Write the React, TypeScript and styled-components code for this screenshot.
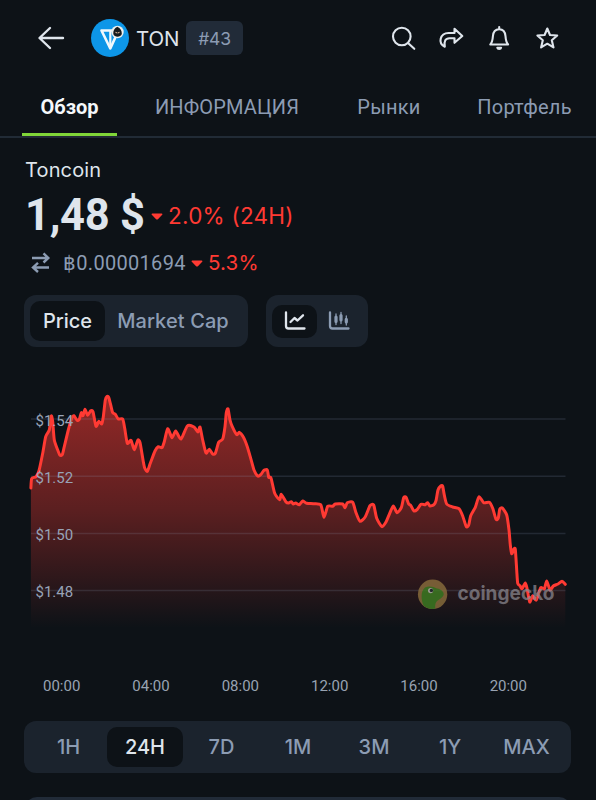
import React from 'react';
import styled, { createGlobalStyle } from 'styled-components';

const color = {
  bg: '#0d1217',
  panel: '#1b232d',
  text: '#dfe5ec',
  muted: '#8c9cb3',
  red: '#ff3a33',
  green: '#80d638',
};

const GlobalStyle = createGlobalStyle`
  * { box-sizing: border-box; }
  body {
    margin: 0;
    background: ${color.bg};
    color: ${color.text};
    font-family: Inter, "Liberation Sans", sans-serif;
    overflow: hidden;
  }
`;

const Screen = styled.main`
  width: 596px;
  height: 800px;
  overflow: hidden;
  background: ${color.bg};
  display: flex;
  flex-direction: column;
`;

const Header = styled.header`
  flex: none;
  height: 76px;
  padding: 0 36px 0 37px;
  display: flex;
  align-items: center;
`;

const BackIcon = styled.svg`
  width: 28px;
  height: 26px;
  margin-right: 26px;
`;

const CoinLogo = styled.svg`
  width: 38px;
  height: 38px;
`;

const Ticker = styled.span`
  margin-left: 7px;
  width: 50px;
  font-size: 20.5px;
  letter-spacing: -0.2px;
  white-space: nowrap;
`;

const Rank = styled.span`
  width: 57px;
  height: 34px;
  border-radius: 6px;
  background: #212b38;
  color: ${color.muted};
  font-size: 17.5px;
  display: flex;
  align-items: center;
  justify-content: center;
  letter-spacing: -0.2px;
`;

const Actions = styled.nav`
  margin-left: auto;
  display: flex;
  gap: 22px;
`;

const ActionIcon = styled.svg`
  width: 26px;
  height: 26px;
  fill: none;
  stroke: ${color.text};
  stroke-width: 2.1;
  stroke-linejoin: round;
  stroke-linecap: round;
`;

const Tabs = styled.nav`
  flex: none;
  height: 62px;
  padding-left: 22px;
  display: flex;
  border-bottom: 2px solid #212b36;
`;

const Tab = styled.a<{ $active?: boolean; $width: number; $spacing?: number }>`
  flex: none;
  width: ${(p) => p.$width}px;
  height: 60px;
  display: flex;
  justify-content: center;
  padding-top: 19px;
  line-height: 24px;
  font-family: Roboto, sans-serif;
  font-size: 20px;
  font-weight: ${(p) => (p.$active ? 700 : 400)};
  letter-spacing: ${(p) => p.$spacing ?? 0}px;
  color: ${(p) => (p.$active ? '#f5f8fb' : color.muted)};
  box-shadow: ${(p) => (p.$active ? `inset 0 -3px ${color.green}` : 'none')};
  white-space: nowrap;
`;

const Summary = styled.section`
  flex: none;
  height: 157px;
  padding: 20px 25px 0;
`;

const CoinName = styled.h1`
  margin: 0;
  font-size: 20px;
  line-height: 24px;
  font-weight: 400;
  letter-spacing: 0.15px;
`;

const PriceRow = styled.div`
  display: flex;
  align-items: center;
  height: 56px;
  margin-top: 6px;
`;

const Price = styled.strong`
  width: 126px;
  font: 700 43.5px/56px Roboto, sans-serif;
  letter-spacing: -0.3px;
  white-space: nowrap;
`;

const Caret = styled.svg`
  width: 12px;
  height: 7px;
  fill: ${color.red};
`;

const Change = styled.span<{ $size: number; $spacing: number }>`
  margin-left: 5px;
  padding-bottom: 2px;
  color: ${color.red};
  font-size: ${(p) => p.$size}px;
  letter-spacing: ${(p) => p.$spacing}px;
  white-space: nowrap;
`;

const BtcRow = styled.div`
  display: flex;
  align-items: center;
  height: 30px;
  margin-top: 4px;
  padding-left: 6px;
`;

const SwapIcon = styled.svg`
  width: 20px;
  height: 22px;
  fill: none;
  stroke: ${color.muted};
  stroke-width: 2.4;
`;

const BtcPrice = styled.span`
  margin-left: 12px;
  width: 128px;
  font: 400 20px/30px Roboto, sans-serif;
  letter-spacing: 0.3px;
  color: ${color.muted};
  white-space: nowrap;
`;

const Controls = styled.div`
  flex: none;
  height: 52px;
  padding-left: 24px;
  display: flex;
  gap: 18px;
`;

const Segmented = styled.div<{ $width: number }>`
  width: ${(p) => p.$width}px;
  height: 52px;
  border-radius: 12px;
  background: ${color.panel};
  padding: 0 6px;
  display: flex;
  align-items: center;
`;

const Segment = styled.button<{ $active?: boolean; $width: number; $height?: number; $spacing?: number }>`
  flex: none;
  width: ${(p) => p.$width}px;
  height: ${(p) => p.$height ?? 40}px;
  padding: 0;
  border: 0;
  border-radius: 10px;
  background: ${(p) => (p.$active ? color.bg : 'transparent')};
  color: ${(p) => (p.$active ? color.text : color.muted)};
  font: 500 20px/24px Inter, sans-serif;
  letter-spacing: ${(p) => p.$spacing ?? 0}px;
  display: flex;
  align-items: center;
  justify-content: center;
  white-space: nowrap;
`;

const ChartIcon = styled.svg`
  width: 22px;
  height: 20px;
  fill: none;
  stroke: currentColor;
  stroke-width: 2.3;
  stroke-linecap: round;
  stroke-linejoin: round;
`;

const Chart = styled.svg`
  flex: none;
  display: block;
  width: 596px;
  height: 293px;
`;

const AxisLabel = styled.text`
  font: 400 15px Roboto, sans-serif;
  fill: #98a3b7;
`;

const Brand = styled.text`
  font: 700 20px Inter, sans-serif;
  fill: #8b8991;
`;

const TimeAxis = styled.div`
  flex: none;
  height: 81px;
  padding: 36px 43px 0 17px;
  display: flex;
`;

const TimeLabel = styled.span`
  flex: 1;
  text-align: center;
  font: 400 15px/20px Roboto, sans-serif;
  color: #98a3b2;
`;

const Ranges = styled(Segmented)`
  flex: none;
  margin-left: 24px;
`;

const NextCard = styled.div`
  flex: none;
  margin: 24px 25px 0;
  height: 60px;
  border-radius: 12px;
  background: #212b38;
`;

const series: [number, number][] = [
  [30.9, 488], [31.7, 478.5], [36, 476.7], [39, 470.7], [42.7, 453.3], [45.7, 436.7], [49.3, 430], [51.3, 416],
  [52.7, 421.7], [54.3, 440], [57.7, 450], [60, 455.3], [62.3, 454.7], [64.3, 446.7], [68.3, 430], [71.7, 418.3],
  [74, 415.7], [77, 420.3], [79.3, 419.3], [81.3, 412.7], [83, 415.7], [85, 409.3], [87.7, 415.3], [90.7, 410.7],
  [93, 411.7], [96, 426.3], [98.7, 421.3], [101.7, 424], [103.3, 416.7], [105.3, 400], [107, 396.3], [108.7, 397.3],
  [110.7, 405], [112.7, 412.7], [115.3, 414.3], [118.3, 419], [122.7, 419], [124.7, 428.3], [127.3, 443.3],
  [131, 440.3], [134.3, 449.7], [137.7, 440.3], [140, 442.3], [143.3, 461.7], [144.7, 468], [147.3, 471.3],
  [150.3, 463.3], [155, 451], [158.3, 446.7], [162, 447.7], [164.3, 441.7], [167.7, 428.7], [172, 437.7],
  [175.7, 431], [181, 439], [187.3, 426], [194, 427], [198, 432], [200, 427], [202.7, 440], [206, 453],
  [209.3, 449.3], [212.7, 454], [215.3, 453.3], [218.7, 442.3], [222.7, 439], [225, 426.7], [226.3, 412.7],
  [228, 408.8], [230, 420], [232.3, 426.7], [236.7, 434.7], [239.3, 432.3], [243.3, 437], [247.3, 446.7],
  [250.7, 458.3], [254, 470], [257.7, 476], [260.7, 474.7], [264, 470.3], [267.3, 470], [268.7, 477.3], [271, 478],
  [274.7, 493.3], [279.7, 499.7], [281.3, 494.3], [286, 502], [288.7, 503], [291.3, 501.7], [293.3, 504],
  [295.7, 503], [299.3, 504.7], [302.7, 501], [306.7, 503.3], [313.3, 503.7], [320.7, 504.7], [324, 517.3],
  [327.7, 506.3], [332.7, 506.3], [335.3, 504], [342.7, 504], [345, 507.7], [347.3, 502.7], [352.7, 502.3],
  [356, 512.7], [360, 521.3], [365.3, 516.7], [370, 505.7], [373.7, 505], [376.7, 518.3], [382, 526.7], [386, 522],
  [389.3, 514.3], [393.3, 506], [397, 512.7], [401.3, 507.7], [403.7, 497.7], [406, 497.3], [408.7, 504],
  [410.7, 505.3], [414, 511], [417.3, 509.3], [421, 504.3], [425.3, 504.7], [427.7, 502.7], [430, 506],
  [434, 504.7], [436, 500.7], [438, 490], [441, 485.7], [442.7, 486.3], [444.3, 495], [446.7, 504], [452.7, 507],
  [459, 508.7], [462.7, 516], [466.3, 526.7], [468.7, 525], [470.7, 515.7], [475.3, 507.3], [479, 496.7],
  [483.7, 502.7], [489.3, 502.3], [492.7, 508.3], [496, 519.3], [498.3, 518], [499.7, 509.3], [502.3, 508],
  [506.7, 515], [509, 530], [510.3, 545], [511.7, 553.7], [513.7, 549.3], [515.3, 549.3], [516.7, 570],
  [517.7, 583.3], [520, 585.7], [522, 588.7], [525.3, 583], [527, 588.3], [529.7, 602], [532.7, 595.7],
  [536.3, 600], [540.7, 587.7], [544.3, 589], [546.7, 581], [550, 590], [553.3, 586], [558, 584], [562, 581.3],
  [565.3, 584.3],
];

/* Joins the points with gently rounded cubic segments. */
const smoothPath = (pts: [number, number][]) => {
  const k = 0.11;
  let d = `M${pts[0][0]} ${pts[0][1]}`;
  for (let i = 0; i < pts.length - 1; i++) {
    const prev = pts[i - 1] ?? pts[i];
    const a = pts[i];
    const b = pts[i + 1];
    const next = pts[i + 2] ?? b;
    const c1 = [a[0] + (b[0] - prev[0]) * k, a[1] + (b[1] - prev[1]) * k];
    const c2 = [b[0] - (next[0] - a[0]) * k, b[1] - (next[1] - a[1]) * k];
    d += `C${c1.map((n) => n.toFixed(2)).join(' ')} ${c2.map((n) => n.toFixed(2)).join(' ')} ${b[0]} ${b[1]}`;
  }
  return d;
};

const linePath = smoothPath(series);

const gridRows = [
  { y: 419, label: '$1.54' },
  { y: 476.3, label: '$1.52' },
  { y: 533.5, label: '$1.50' },
  { y: 590.5, label: '$1.48' },
];

const times = ['00:00', '04:00', '08:00', '12:00', '16:00', '20:00'];

const ranges = [
  { label: '1H', width: 77 },
  { label: '24H', width: 76, active: true },
  { label: '7D', width: 77 },
  { label: '1M', width: 76 },
  { label: '3M', width: 76 },
  { label: '1Y', width: 76 },
  { label: 'MAX', width: 77 },
];

const DownCaret = () => (
  <Caret viewBox="0 0 12 7">
    <path d="M1.3 0.4h9.4c.7 0 1 .8.5 1.3L6.9 6.2c-.5.5-1.3.5-1.8 0L.8 1.7C.3 1.2.6.4 1.3.4Z" />
  </Caret>
);

const PriceChart = () => (
  <Chart viewBox="0 347 596 293">
    <defs>
      <linearGradient id="fall" gradientUnits="userSpaceOnUse" x1="0" y1="395" x2="0" y2="628">
        <stop offset="0" stopColor="#ff3a33" stopOpacity="0.56" />
        <stop offset="0.5" stopColor="#ff3a33" stopOpacity="0.32" />
        <stop offset="1" stopColor="#ff3a33" stopOpacity="0" />
      </linearGradient>
    </defs>
    <path d={`${linePath}L565.3 628L30.9 628Z`} fill="url(#fall)" />
    {gridRows.map((row) => (
      <path key={row.label} d={`M31 ${row.y}H565.5`} stroke="#8fa3bd" strokeOpacity="0.17" strokeWidth="1.6" />
    ))}
    <path d={linePath} fill="none" stroke={color.red} strokeWidth="3" strokeLinejoin="round" strokeLinecap="round" />
    {gridRows.map((row) => (
      <AxisLabel key={row.label} x="35.5" y={row.y + 6.7}>{row.label}</AxisLabel>
    ))}
    <g opacity="0.8">
      <circle cx="432.6" cy="594.3" r="14.7" fill="#8b6f3d" />
      <path
        d="M423.500 605.500C421 600 420.500 591 425 587.500C428.500 585.500 433 586.500 437 588.500C441 589.300 443.800 591.500 443.700 594.500C443 598 438 599.500 436.300 602C434.800 604.500 435.300 607 435.300 608.600C431 609.500 426.500 608.500 423.500 605.500Z"
        fill="#3e8022"
      />
      <circle cx="430.600" cy="590.6" r="2.600" fill="#b6b8ab" />
      <circle cx="431.400" cy="590.4" r="1.700" fill="#20272b" />
    </g>
    <g opacity="0.72">
      <Brand x="457.500" y="600" textLength="97" lengthAdjust="spacingAndGlyphs">coingecko</Brand>
    </g>
  </Chart>
);

export default function App() {
  return (
    <>
      <GlobalStyle />
      <Screen>
        <Header>
          <BackIcon viewBox="0 0 28 26" fill="none" stroke={color.text} strokeWidth="2.4" strokeLinecap="round" strokeLinejoin="round">
            <path d="M26 13H3M13 3L2.500 13L13 23" />
          </BackIcon>
          <CoinLogo viewBox="0 0 38 38">
            <circle cx="19" cy="19" r="19" fill="#0d96e8" />
            <path d="M10.500 11.500H27.500L19.300 29.500Z" fill="none" stroke="#f2f8fc" strokeWidth="2.600" strokeLinejoin="round" />
            <path d="M19.300 12V28" stroke="#f2f8fc" strokeWidth="2.200" />
            <circle cx="26.500" cy="13" r="6.200" fill="#eef0ee" />
            <path d="M26.300 7.800C23.300 9 22 12 22.300 15C23.500 18.500 29.500 18.500 30.800 15C31 12 29.500 9 26.300 7.800Z" fill="#171a1d" />
            <path d="M24 12.700L26 13.300L26.500 14.200L27 13.300L29 12.700L28 14.200H25Z" fill="#d8b295" />
          </CoinLogo>
          <Ticker>TON</Ticker>
          <Rank>#43</Rank>
          <Actions>
            <ActionIcon viewBox="0 0 26 26">
              <circle cx="11.800" cy="11.500" r="8.800" />
              <path d="M18 18L24.300 23.800" />
            </ActionIcon>
            <ActionIcon viewBox="0 0 26 26">
              <path d="M6.800 21.800C3.300 20 1.900 17 2.700 13.800C3.600 10.200 6.500 8 10.500 8H16.500V3.800L24.300 11L16.500 17.800V13.200H11.500C7.500 13.200 5.800 16 6.800 21.800Z" />
            </ActionIcon>
            <ActionIcon viewBox="0 0 26 26">
              <path d="M13.200 2V4M4.300 19.500H22.100C20.200 17.500 19.800 15.500 19.500 11.300C19.200 7 16.700 4.300 13.200 4.300S7.200 7 6.900 11.300C6.600 15.500 6.200 17.500 4.300 19.500Z" />
              <path d="M11.300 22.800H15.100C14.700 24.300 11.700 24.300 11.300 22.800Z" fill={color.text} />
            </ActionIcon>
            <ActionIcon viewBox="0 0 26 26">
              <path d="M13.300 3.500L16 10L23.200 10.500L17.800 15.300L19.500 22.400L13.300 18.700L7.100 22.400L8.800 15.300L3.400 10.500L10.600 10Z" />
            </ActionIcon>
          </Actions>
        </Header>

        <Tabs>
          <Tab $active $width={95}>Обзор</Tab>
          <Tab $width={220} $spacing={0.15}>ИНФОРМАЦИЯ</Tab>
          <Tab $width={104} $spacing={0.25}>Рынки</Tab>
          <Tab $width={167} $spacing={0.25}>Портфель</Tab>
        </Tabs>

        <Summary>
          <CoinName>Toncoin</CoinName>
          <PriceRow>
            <Price>1,48 $</Price>
            <DownCaret />
            <Change $size={22.5} $spacing={0.25}>2.0% (24H)</Change>
          </PriceRow>
          <BtcRow>
            <SwapIcon viewBox="0 0 20 22">
              <path d="M1 6H17M12.500 1.300L17.300 6L12.500 10.500M18 15.500H2M7 10.800L2 15.500L7 20" />
            </SwapIcon>
            <BtcPrice>฿0.00001694</BtcPrice>
            <DownCaret />
            <Change $size={20.5} $spacing={0.15}>5.3%</Change>
          </BtcRow>
        </Summary>

        <Controls>
          <Segmented $width={224}>
            <Segment $active $width={75}>Price</Segment>
            <Segment $width={136} $spacing={0.1}>Market Cap</Segment>
          </Segmented>
          <Segmented $width={102}>
            <Segment $active $width={45} $height={33}>
              <ChartIcon viewBox="0 0 22 20">
                <path d="M2 1.500V15Q2 17.500 4.500 17.500H20.500M6.500 11L10.500 7L13.500 9.500L19 4.300" />
              </ChartIcon>
            </Segment>
            <Segment $width={44} $height={33}>
              <ChartIcon viewBox="0 0 22 20">
                <path d="M2 1.500V15Q2 17.500 4.500 17.500H20.500" />
                <path d="M8 3V13.500M13 1.500V12.500M18.300 5V14" strokeWidth="1.300" />
                <path d="M8 6V10.500M13 4.500V9M18.300 8.300V11" strokeWidth="3.200" />
              </ChartIcon>
            </Segment>
          </Segmented>
        </Controls>

        <PriceChart />

        <TimeAxis>
          {times.map((t) => (
            <TimeLabel key={t}>{t}</TimeLabel>
          ))}
        </TimeAxis>

        <Ranges $width={547}>
          {ranges.map((r) => (
            <Segment key={r.label} $width={r.width} $active={r.active}>{r.label}</Segment>
          ))}
        </Ranges>
        <NextCard />
      </Screen>
    </>
  );
}
